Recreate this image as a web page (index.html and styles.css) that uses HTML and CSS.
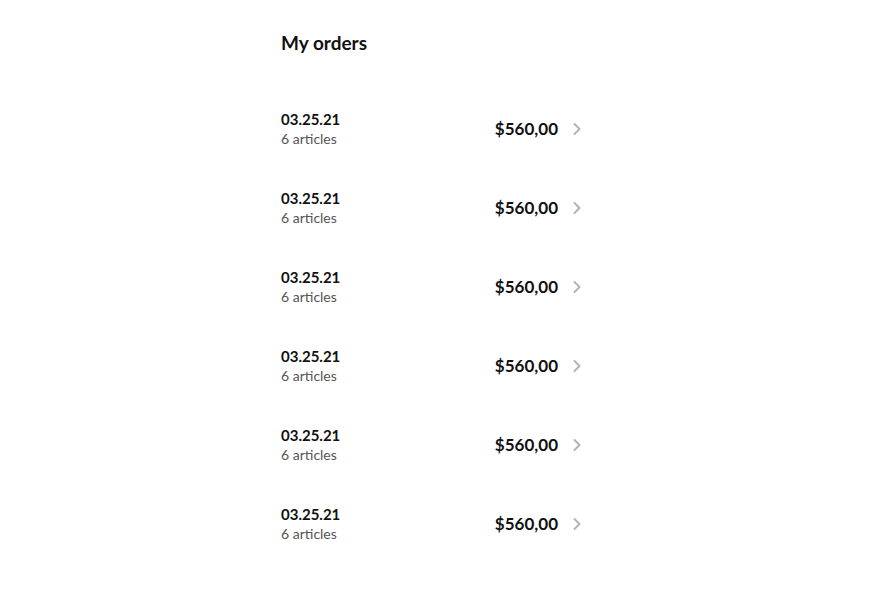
FILE: index.html
```html
<!DOCTYPE html>
<html>
<head>
<meta charset="utf-8">
<link rel="stylesheet" href="styles.css">
</head>
<body>
<main class="page">
  <h1 class="title">My orders</h1>
  <ul class="orders">
    <li class="order"><div class="info"><div class="date">03.25.21</div><div class="count">6 articles</div></div><div class="price">$560,00</div><svg class="chev" width="12" height="14" viewBox="0 0 12 14"><path d="M3.5 2 L8.5 7 L3.5 12" fill="none" stroke="#b3b3b3" stroke-width="2" stroke-linecap="round" stroke-linejoin="round"/></svg></li>
    <li class="order"><div class="info"><div class="date">03.25.21</div><div class="count">6 articles</div></div><div class="price">$560,00</div><svg class="chev" width="12" height="14" viewBox="0 0 12 14"><path d="M3.5 2 L8.5 7 L3.5 12" fill="none" stroke="#b3b3b3" stroke-width="2" stroke-linecap="round" stroke-linejoin="round"/></svg></li>
    <li class="order"><div class="info"><div class="date">03.25.21</div><div class="count">6 articles</div></div><div class="price">$560,00</div><svg class="chev" width="12" height="14" viewBox="0 0 12 14"><path d="M3.5 2 L8.5 7 L3.5 12" fill="none" stroke="#b3b3b3" stroke-width="2" stroke-linecap="round" stroke-linejoin="round"/></svg></li>
    <li class="order"><div class="info"><div class="date">03.25.21</div><div class="count">6 articles</div></div><div class="price">$560,00</div><svg class="chev" width="12" height="14" viewBox="0 0 12 14"><path d="M3.5 2 L8.5 7 L3.5 12" fill="none" stroke="#b3b3b3" stroke-width="2" stroke-linecap="round" stroke-linejoin="round"/></svg></li>
    <li class="order"><div class="info"><div class="date">03.25.21</div><div class="count">6 articles</div></div><div class="price">$560,00</div><svg class="chev" width="12" height="14" viewBox="0 0 12 14"><path d="M3.5 2 L8.5 7 L3.5 12" fill="none" stroke="#b3b3b3" stroke-width="2" stroke-linecap="round" stroke-linejoin="round"/></svg></li>
    <li class="order"><div class="info"><div class="date">03.25.21</div><div class="count">6 articles</div></div><div class="price">$560,00</div><svg class="chev" width="12" height="14" viewBox="0 0 12 14"><path d="M3.5 2 L8.5 7 L3.5 12" fill="none" stroke="#b3b3b3" stroke-width="2" stroke-linecap="round" stroke-linejoin="round"/></svg></li>
  </ul>
</main>
</body>
</html>
```
FILE: styles.css
```css
html, body { margin: 0; padding: 0; background: #fff; }
body { font-family: "Lato", "Open Sans", sans-serif; color: #111; }
.page { width: 302px; padding: 32px 0 0 281px; }
.title { margin: 0; font-size: 19px; line-height: 22px; font-weight: 700; }
.orders { list-style: none; margin: 0; padding: 35px 0 0 0; }
.order { height: 79px; display: flex; align-items: center; }
.info { flex: 1; display: flex; flex-direction: column; }
.date { font-size: 15px; font-weight: 700; line-height: 19px; }
.count { font-size: 14px; color: #555; line-height: 19px; }
.price { font-size: 17px; font-weight: 700; }
.chev { margin-left: 13px; }
```
